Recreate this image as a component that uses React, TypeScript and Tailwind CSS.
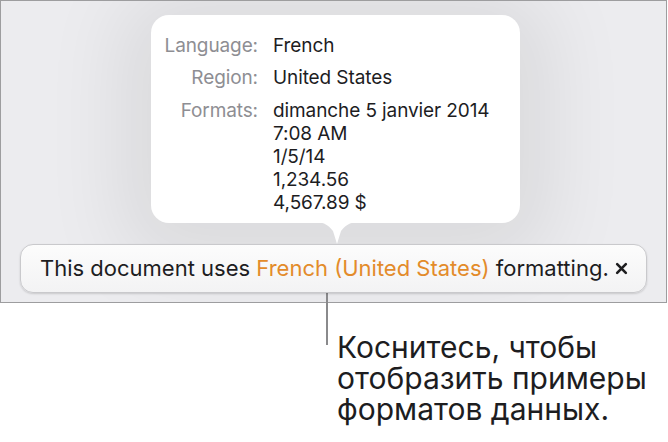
import React from "react";

export default function App() {
  const font = { fontFamily: "Inter, 'Noto Sans', sans-serif" };
  return (
    <div className="w-[668px] h-[442px] bg-white relative overflow-hidden" style={font}>
      <div className="w-[667px] h-[303px] border border-[#9d9d9f] bg-[#ececef] flex flex-col relative overflow-hidden">
        <div className="relative ml-[150px] mt-[14px] w-[369px] h-[208px] rounded-[18px] bg-white shadow-[0_10px_80px_30px_rgba(0,0,0,0.08)]">
          <div className="grid grid-cols-[107px_1fr] gap-x-[15px] pt-[19px] text-[19px] leading-[23px] tracking-[-0.1px]">
            <div className="text-right text-[#8e8e93]">Language:</div>
            <div className="text-[#1d1d1f]">French</div>
            <div className="text-right text-[#8e8e93] mt-[9px]">Region:</div>
            <div className="text-[#1d1d1f] mt-[9px]">United States</div>
            <div className="text-right text-[#8e8e93] mt-[10px]">Formats:</div>
            <div className="text-[#1d1d1f] mt-[10px] flex flex-col">
              <span>dimanche 5 janvier 2014</span>
              <span>7:08 AM</span>
              <span>1/5/14</span>
              <span>1,234.56</span>
              <span>4,567.89 $</span>
            </div>
          </div>
          <svg className="absolute left-[164px] top-[207px]" width="44" height="23" viewBox="0 0 44 23">
            <path d="M0 0 C10 0 14 4 18 9 L22 22 L26 9 C30 4 34 0 44 0 Z" fill="#ffffff" />
          </svg>
        </div>
        <div className="ml-[19px] mt-[21px] w-[627px] h-[49px] rounded-[13px] border border-[#c9c9cc] bg-gradient-to-b from-[#fcfcfc] to-[#f3f3f4] shadow-[0_1px_2px_rgba(0,0,0,0.15)] flex items-center pl-[19px] pr-[18px] text-[22px] text-[#1d1d1f] relative z-10">
          <span className="flex-1 whitespace-nowrap">
            This document uses <span className="text-[#e38b2a]">French (United States)</span> formatting.
          </span>
          <svg width="13" height="13" viewBox="0 0 12 12">
            <path d="M2 2 L10 10 M10 2 L2 10" stroke="#1d1d1f" strokeWidth="2.4" strokeLinecap="round" />
          </svg>
        </div>
      </div>
      <div className="absolute left-[326px] top-[291px] w-[2px] h-[54px] bg-[#8a8a8c]" />
      <div className="ml-[337px] mt-[29px] text-[30px] leading-[31px] text-[#1d1d1f] whitespace-nowrap">
        <div>Коснитесь, чтобы</div>
        <div>отобразить примеры</div>
        <div>форматов данных.</div>
      </div>
    </div>
  );
}
